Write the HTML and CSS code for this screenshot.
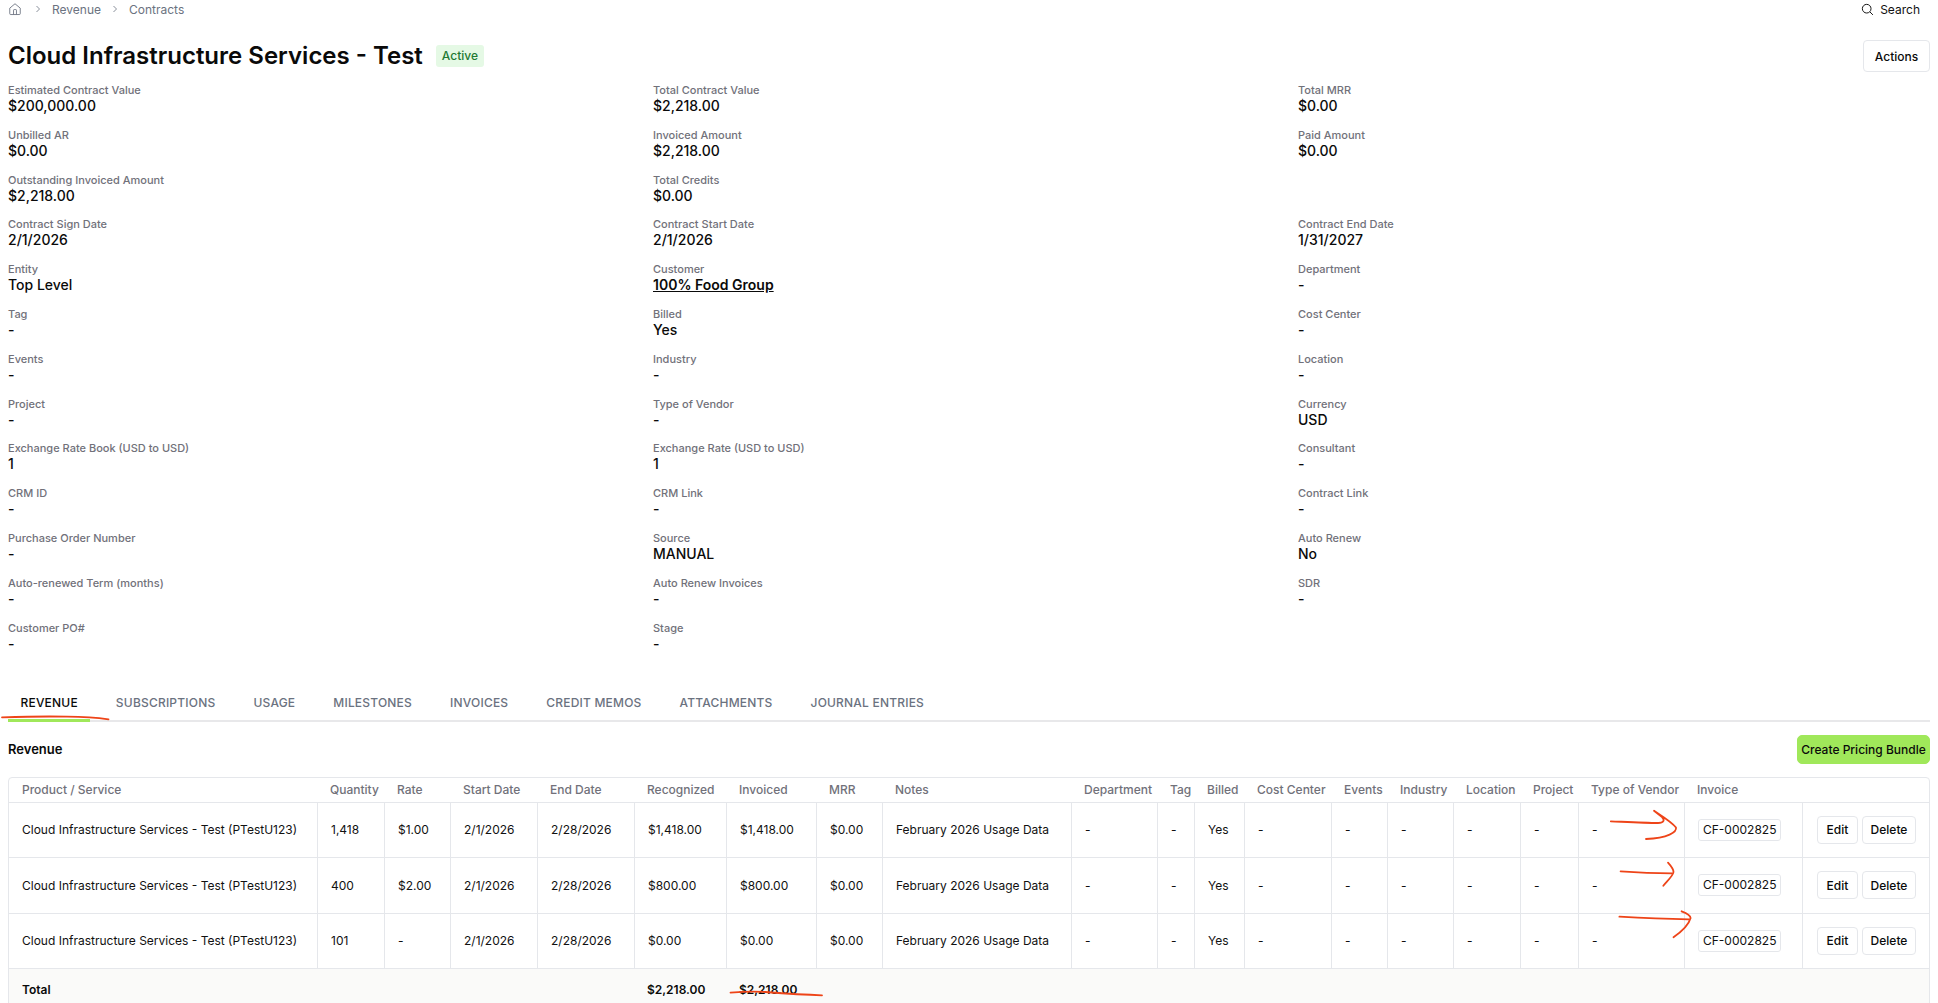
FILE: index.html
```html
<!DOCTYPE html>
<html lang="en">
<head>
<meta charset="utf-8">
<title>Cloud Infrastructure Services - Test</title>
<link rel="stylesheet" href="styles.css">
</head>
<body>
<div class="page">
  <header class="topbar">
    <nav class="crumbs">
      <svg class="home" viewBox="0 0 24 24" width="14" height="14"><path d="M3 10.5 12 3l9 7.500V20a1.500 1.500 0 0 1-1.500 1.500h-15A1.500 1.500 0 0 1 3 20z"/><path d="M9.500 21.500V14a1 1 0 0 1 1-1h3a1 1 0 0 1 1 1v7.500"/></svg>
      <svg class="sep" viewBox="0 0 8 8" width="8" height="8"><path d="M2.500 1 5.500 4l-3 3"/></svg>
      <span>Revenue</span>
      <svg class="sep" viewBox="0 0 8 8" width="8" height="8"><path d="M2.500 1 5.500 4l-3 3"/></svg>
      <span>Contracts</span>
    </nav>
    <div class="search">
      <svg viewBox="0 0 24 24" width="13" height="13"><circle cx="10.500" cy="10.500" r="8"/><path d="m16.500 16.500 5.500 5.500"/></svg>
      <span>Search</span>
    </div>
  </header>

  <section class="titlerow">
    <div class="titlegroup">
      <h1>Cloud Infrastructure Services - Test</h1>
      <span class="badge">Active</span>
    </div>
    <button class="btn actions">Actions</button>
  </section>

  <section class="fields">
    <div class="field"><div class="lbl">Estimated Contract Value</div><div class="val">$200,000.00</div></div>
    <div class="field"><div class="lbl">Total Contract Value</div><div class="val">$2,218.00</div></div>
    <div class="field"><div class="lbl">Total MRR</div><div class="val">$0.00</div></div>

    <div class="field"><div class="lbl">Unbilled AR</div><div class="val">$0.00</div></div>
    <div class="field"><div class="lbl">Invoiced Amount</div><div class="val">$2,218.00</div></div>
    <div class="field"><div class="lbl">Paid Amount</div><div class="val">$0.00</div></div>

    <div class="field"><div class="lbl">Outstanding Invoiced Amount</div><div class="val">$2,218.00</div></div>
    <div class="field"><div class="lbl">Total Credits</div><div class="val">$0.00</div></div>
    <div class="field"></div>

    <div class="field"><div class="lbl">Contract Sign Date</div><div class="val">2/1/2026</div></div>
    <div class="field"><div class="lbl">Contract Start Date</div><div class="val">2/1/2026</div></div>
    <div class="field"><div class="lbl">Contract End Date</div><div class="val">1/31/2027</div></div>

    <div class="field"><div class="lbl">Entity</div><div class="val">Top Level</div></div>
    <div class="field"><div class="lbl">Customer</div><div class="val"><a class="link" href="#">100% Food Group</a></div></div>
    <div class="field"><div class="lbl">Department</div><div class="val">-</div></div>

    <div class="field"><div class="lbl">Tag</div><div class="val">-</div></div>
    <div class="field"><div class="lbl">Billed</div><div class="val">Yes</div></div>
    <div class="field"><div class="lbl">Cost Center</div><div class="val">-</div></div>

    <div class="field"><div class="lbl">Events</div><div class="val">-</div></div>
    <div class="field"><div class="lbl">Industry</div><div class="val">-</div></div>
    <div class="field"><div class="lbl">Location</div><div class="val">-</div></div>

    <div class="field"><div class="lbl">Project</div><div class="val">-</div></div>
    <div class="field"><div class="lbl">Type of Vendor</div><div class="val">-</div></div>
    <div class="field"><div class="lbl">Currency</div><div class="val">USD</div></div>

    <div class="field"><div class="lbl">Exchange Rate Book (USD to USD)</div><div class="val">1</div></div>
    <div class="field"><div class="lbl">Exchange Rate (USD to USD)</div><div class="val">1</div></div>
    <div class="field"><div class="lbl">Consultant</div><div class="val">-</div></div>

    <div class="field"><div class="lbl">CRM ID</div><div class="val">-</div></div>
    <div class="field"><div class="lbl">CRM Link</div><div class="val">-</div></div>
    <div class="field"><div class="lbl">Contract Link</div><div class="val">-</div></div>

    <div class="field"><div class="lbl">Purchase Order Number</div><div class="val">-</div></div>
    <div class="field"><div class="lbl">Source</div><div class="val">MANUAL</div></div>
    <div class="field"><div class="lbl">Auto Renew</div><div class="val">No</div></div>

    <div class="field"><div class="lbl">Auto-renewed Term (months)</div><div class="val">-</div></div>
    <div class="field"><div class="lbl">Auto Renew Invoices</div><div class="val">-</div></div>
    <div class="field"><div class="lbl">SDR</div><div class="val">-</div></div>

    <div class="field"><div class="lbl">Customer PO#</div><div class="val">-</div></div>
    <div class="field"><div class="lbl">Stage</div><div class="val">-</div></div>
    <div class="field"></div>
  </section>

  <nav class="tabs">
    <a class="tab active">REVENUE</a>
    <a class="tab">SUBSCRIPTIONS</a>
    <a class="tab">USAGE</a>
    <a class="tab">MILESTONES</a>
    <a class="tab">INVOICES</a>
    <a class="tab">CREDIT MEMOS</a>
    <a class="tab">ATTACHMENTS</a>
    <a class="tab">JOURNAL ENTRIES</a>
  </nav>

  <section class="sectionhead">
    <h2>Revenue</h2>
    <button class="btn primary">Create Pricing Bundle</button>
  </section>

  <div class="tablewrap">
    <table class="grid">
      <colgroup>
        <col class="c1"><col class="c2"><col class="c3"><col class="c4"><col class="c5"><col class="c6"><col class="c7"><col class="c8"><col class="c9"><col class="c10"><col class="c11"><col class="c12"><col class="c13"><col class="c14"><col class="c15"><col class="c16"><col class="c17"><col class="c18"><col class="c19"><col class="c20">
      </colgroup>
      <thead>
        <tr><th>Product / Service</th><th>Quantity</th><th>Rate</th><th>Start Date</th><th>End Date</th><th>Recognized</th><th>Invoiced</th><th>MRR</th><th>Notes</th><th>Department</th><th>Tag</th><th>Billed</th><th>Cost Center</th><th>Events</th><th>Industry</th><th>Location</th><th>Project</th><th>Type of Vendor</th><th>Invoice</th><th></th></tr>
      </thead>
      <tbody>
        <tr class="r55"><td>Cloud Infrastructure Services - Test (PTestU123)</td><td>1,418</td><td>$1.00</td><td>2/1/2026</td><td>2/28/2026</td><td>$1,418.00</td><td>$1,418.00</td><td>$0.00</td><td>February 2026 Usage Data</td><td>-</td><td>-</td><td>Yes</td><td>-</td><td>-</td><td>-</td><td>-</td><td>-</td><td>-</td><td><span class="inv">CF-0002825</span></td><td class="acts"><div class="actgroup"><button class="btn small">Edit</button><button class="btn small">Delete</button></div></td></tr>
        <tr class="r56"><td>Cloud Infrastructure Services - Test (PTestU123)</td><td>400</td><td>$2.00</td><td>2/1/2026</td><td>2/28/2026</td><td>$800.00</td><td>$800.00</td><td>$0.00</td><td>February 2026 Usage Data</td><td>-</td><td>-</td><td>Yes</td><td>-</td><td>-</td><td>-</td><td>-</td><td>-</td><td>-</td><td><span class="inv">CF-0002825</span></td><td class="acts"><div class="actgroup"><button class="btn small">Edit</button><button class="btn small">Delete</button></div></td></tr>
        <tr class="r55"><td>Cloud Infrastructure Services - Test (PTestU123)</td><td>101</td><td>-</td><td>2/1/2026</td><td>2/28/2026</td><td>$0.00</td><td>$0.00</td><td>$0.00</td><td>February 2026 Usage Data</td><td>-</td><td>-</td><td>Yes</td><td>-</td><td>-</td><td>-</td><td>-</td><td>-</td><td>-</td><td><span class="inv">CF-0002825</span></td><td class="acts"><div class="actgroup"><button class="btn small">Edit</button><button class="btn small">Delete</button></div></td></tr>
      </tbody>
      <tfoot>
        <tr><td>Total</td><td></td><td></td><td></td><td></td><td>$2,218.00</td><td>$2,218.00</td><td></td><td></td><td></td><td></td><td></td><td></td><td></td><td></td><td></td><td></td><td></td><td></td><td></td></tr>
      </tfoot>
    </table>
  </div>
</div>

<svg class="ink" viewBox="0 0 1938 1003" width="1938" height="1003" aria-hidden="true">
  <path d="M2 717.300C30 716.500 50 716.300 67 716.700 85 717 98 718 108.500 719.300"/>
  <path d="M730.500 992.700C745 991.500 755 991.400 765 992 785 993.500 805 994.800 822 995.300"/>
  <path d="M1610.800 821.300C1628 822 1645 822.800 1658 823 1664 823 1665 820 1662 817L1654 810.700C1662 816 1672 822 1676 827.500 1677 832 1668 838 1646 839"/>
  <path d="M1620.600 871.300C1638 872.500 1655 873.200 1672 873.300"/>
  <path d="M1668 862.700C1671 866 1673.500 869 1673.500 872 1673 876 1667 881 1663.300 885.700"/>
  <path d="M1619.400 916.700C1642 918 1668 919 1689 919.300"/>
  <path d="M1681.600 911.300C1686 913 1690.500 915 1690.600 918 1689 924 1681 932 1673.500 937.300"/>
</svg>
</body>
</html>
```

FILE: styles.css
```css
* { box-sizing: border-box; }
html, body { margin: 0; padding: 0; background: #fff; }
body {
  font-family: Inter, "Liberation Sans", sans-serif;
  color: #0a0a0a;
  overflow: hidden;
  height: 1003px;
  position: relative;
}
.page { padding: 0 8px; }

.topbar {
  display: flex;
  justify-content: space-between;
  align-items: center;
  height: 18px;
  font-size: 12px;
}
.crumbs { display: flex; align-items: center; color: #6b7280; gap: 10px; }
.home { fill: none; stroke: #6b7280; stroke-width: 1.500; margin-right: 2px; }
.sep { fill: none; stroke: #6b7280; stroke-width: 0.800; }
.search { display: flex; align-items: center; gap: 6px; padding-right: 10px; color: #111; }
.search svg { fill: none; stroke: #111; stroke-width: 1.800; }

.titlerow {
  display: flex;
  justify-content: space-between;
  align-items: center;
  margin-top: 22px;
  height: 32px;
}
.titlegroup { display: flex; align-items: center; gap: 13px; }
h1 { margin: 0; font-size: 24px; line-height: 30px; font-weight: 600; }
.badge {
  background: #e5f9e5;
  color: #1f7a33;
  font-size: 12px;
  line-height: 22px;
  height: 22px;
  padding: 0 6px;
  border-radius: 3px;
  font-weight: 500;
}
.btn {
  font-family: inherit;
  background: #fff;
  border: 1px solid #e5e7eb;
  border-radius: 4px;
  color: #0a0a0a;
  font-weight: 500;
  padding: 0;
  cursor: pointer;
}
.actions { width: 67px; height: 32px; font-size: 12px; }

.fields {
  display: grid;
  grid-template-columns: repeat(3, 645px);
  grid-auto-rows: 32px;
  row-gap: 12.800px;
  margin-top: 11px;
}
.lbl { font-size: 11px; line-height: 14px; color: #71717a; font-weight: 500; }
.val { font-size: 14px; line-height: 18px; font-weight: 500; color: #0a0a0a; }
.link { color: inherit; text-decoration: underline; font-weight: 600; }

.tabs {
  display: flex;
  gap: 13px;
  margin-top: 33px;
  border-bottom: 2px solid #e8e8ea;
  height: 36px;
}
.tab {
  font-size: 12px;
  font-weight: 500;
  color: #6b7280;
  line-height: 34px;
  padding: 0 12.500px;
  height: 36px;
  letter-spacing: 0.200px;
}
.tab.active { color: #0a0a0a; border-bottom: 3px solid #a0e85a; }

.sectionhead {
  display: flex;
  justify-content: space-between;
  align-items: center;
  margin-top: 13px;
  height: 29px;
}
h2 { margin: 0; font-size: 13px; font-weight: 600; line-height: 29px; }
.primary {
  background: #a0e85a;
  border-color: #a0e85a;
  width: 133px;
  height: 29px;
  font-size: 12px;
  border-radius: 5px;
}

.tablewrap {
  margin-top: 13px;
  border: 1px solid #e5e7eb;
  border-radius: 4px;
  overflow: hidden;
  width: 1922px;
}
.grid {
  table-layout: fixed;
  border-collapse: separate;
  border-spacing: 0;
  width: 1920px;
  font-size: 12px;
}
.c1 { width: 308px; } .c2 { width: 67px; } .c3 { width: 66px; } .c4 { width: 87px; }
.c5 { width: 97px; } .c6 { width: 92px; } .c7 { width: 90px; } .c8 { width: 66px; }
.c9 { width: 189px; } .c10 { width: 86px; } .c11 { width: 37px; } .c12 { width: 50px; }
.c13 { width: 87px; } .c14 { width: 56px; } .c15 { width: 66px; } .c16 { width: 67px; }
.c17 { width: 58px; } .c18 { width: 106px; } .c19 { width: 118px; } .c20 { width: 127px; }

th {
  height: 25px;
  padding: 0 0 0 13px;
  text-align: left;
  font-weight: 500;
  color: #71717a;
  border-bottom: 1px solid #e5e7eb;
  white-space: nowrap;
  overflow: hidden;
}
tbody td {
  padding: 0 0 0 13px;
  border-bottom: 1px solid #e5e7eb;
  border-left: 1px solid #e5e7eb;
  white-space: nowrap;
  overflow: hidden;
  color: #111;
}
tbody td:first-child { border-left: 0; }
.r55 td { height: 55px; }
.r56 td { height: 56px; }
tfoot td {
  height: 42px;
  padding: 0 0 0 13px;
  background: #fafaf9;
  font-weight: 600;
  white-space: nowrap;
}
.inv {
  display: inline-block;
  border: 1px solid #e5e7eb;
  border-radius: 3px;
  height: 22px;
  line-height: 20px;
  padding: 0 4px;
}
.acts { padding-left: 14px; }
.actgroup { display: flex; gap: 4px; }
.small { height: 28px; font-size: 12px; }
.small:first-child { width: 41px; }
.small:last-child { width: 54px; }

.ink {
  position: absolute;
  left: 0;
  top: 0;
  pointer-events: none;
  fill: none;
  stroke: #ee4418;
  stroke-width: 1.800;
  stroke-linecap: round;
  stroke-linejoin: round;
}
```
